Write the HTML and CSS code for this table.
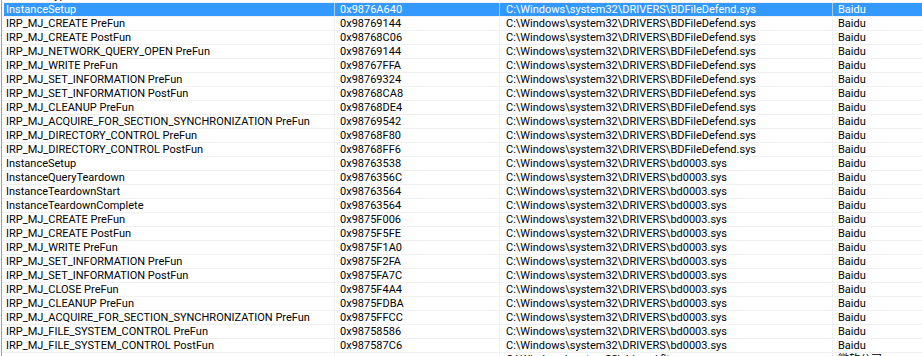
FILE: index.html
```html
<!DOCTYPE html>
<html>
<head>
<meta charset="utf-8">
<link rel="stylesheet" href="styles.css">
</head>
<body>
<div class="list">
  <div class="row prev"><div class="c c1">Callback type</div><div class="c c2"></div><div class="c c3"></div><div class="c c4">文件厂商</div></div>
  <div class="row sel"><div class="c c1">InstanceSetup</div><div class="c c2">0x9876A640</div><div class="c c3">C:\Windows\system32\DRIVERS\BDFileDefend.sys</div><div class="c c4">Baidu</div></div>
  <div class="row"><div class="c c1">IRP_MJ_CREATE PreFun</div><div class="c c2">0x98769144</div><div class="c c3">C:\Windows\system32\DRIVERS\BDFileDefend.sys</div><div class="c c4">Baidu</div></div>
  <div class="row"><div class="c c1">IRP_MJ_CREATE PostFun</div><div class="c c2">0x98768C06</div><div class="c c3">C:\Windows\system32\DRIVERS\BDFileDefend.sys</div><div class="c c4">Baidu</div></div>
  <div class="row"><div class="c c1">IRP_MJ_NETWORK_QUERY_OPEN PreFun</div><div class="c c2">0x98769144</div><div class="c c3">C:\Windows\system32\DRIVERS\BDFileDefend.sys</div><div class="c c4">Baidu</div></div>
  <div class="row"><div class="c c1">IRP_MJ_WRITE PreFun</div><div class="c c2">0x98767FFA</div><div class="c c3">C:\Windows\system32\DRIVERS\BDFileDefend.sys</div><div class="c c4">Baidu</div></div>
  <div class="row"><div class="c c1">IRP_MJ_SET_INFORMATION PreFun</div><div class="c c2">0x98769324</div><div class="c c3">C:\Windows\system32\DRIVERS\BDFileDefend.sys</div><div class="c c4">Baidu</div></div>
  <div class="row"><div class="c c1">IRP_MJ_SET_INFORMATION PostFun</div><div class="c c2">0x98768CA8</div><div class="c c3">C:\Windows\system32\DRIVERS\BDFileDefend.sys</div><div class="c c4">Baidu</div></div>
  <div class="row"><div class="c c1">IRP_MJ_CLEANUP PreFun</div><div class="c c2">0x98768DE4</div><div class="c c3">C:\Windows\system32\DRIVERS\BDFileDefend.sys</div><div class="c c4">Baidu</div></div>
  <div class="row"><div class="c c1">IRP_MJ_ACQUIRE_FOR_SECTION_SYNCHRONIZATION PreFun</div><div class="c c2">0x98769542</div><div class="c c3">C:\Windows\system32\DRIVERS\BDFileDefend.sys</div><div class="c c4">Baidu</div></div>
  <div class="row"><div class="c c1">IRP_MJ_DIRECTORY_CONTROL PreFun</div><div class="c c2">0x98768F80</div><div class="c c3">C:\Windows\system32\DRIVERS\BDFileDefend.sys</div><div class="c c4">Baidu</div></div>
  <div class="row"><div class="c c1">IRP_MJ_DIRECTORY_CONTROL PostFun</div><div class="c c2">0x98768FF6</div><div class="c c3">C:\Windows\system32\DRIVERS\BDFileDefend.sys</div><div class="c c4">Baidu</div></div>
  <div class="row"><div class="c c1">InstanceSetup</div><div class="c c2">0x98763538</div><div class="c c3">C:\Windows\system32\DRIVERS\bd0003.sys</div><div class="c c4">Baidu</div></div>
  <div class="row"><div class="c c1">InstanceQueryTeardown</div><div class="c c2">0x9876356C</div><div class="c c3">C:\Windows\system32\DRIVERS\bd0003.sys</div><div class="c c4">Baidu</div></div>
  <div class="row"><div class="c c1">InstanceTeardownStart</div><div class="c c2">0x98763564</div><div class="c c3">C:\Windows\system32\DRIVERS\bd0003.sys</div><div class="c c4">Baidu</div></div>
  <div class="row"><div class="c c1">InstanceTeardownComplete</div><div class="c c2">0x98763564</div><div class="c c3">C:\Windows\system32\DRIVERS\bd0003.sys</div><div class="c c4">Baidu</div></div>
  <div class="row"><div class="c c1">IRP_MJ_CREATE PreFun</div><div class="c c2">0x9875F006</div><div class="c c3">C:\Windows\system32\DRIVERS\bd0003.sys</div><div class="c c4">Baidu</div></div>
  <div class="row"><div class="c c1">IRP_MJ_CREATE PostFun</div><div class="c c2">0x9875F5FE</div><div class="c c3">C:\Windows\system32\DRIVERS\bd0003.sys</div><div class="c c4">Baidu</div></div>
  <div class="row"><div class="c c1">IRP_MJ_WRITE PreFun</div><div class="c c2">0x9875F1A0</div><div class="c c3">C:\Windows\system32\DRIVERS\bd0003.sys</div><div class="c c4">Baidu</div></div>
  <div class="row"><div class="c c1">IRP_MJ_SET_INFORMATION PreFun</div><div class="c c2">0x9875F2FA</div><div class="c c3">C:\Windows\system32\DRIVERS\bd0003.sys</div><div class="c c4">Baidu</div></div>
  <div class="row"><div class="c c1">IRP_MJ_SET_INFORMATION PostFun</div><div class="c c2">0x9875FA7C</div><div class="c c3">C:\Windows\system32\DRIVERS\bd0003.sys</div><div class="c c4">Baidu</div></div>
  <div class="row"><div class="c c1">IRP_MJ_CLOSE PreFun</div><div class="c c2">0x9875F4A4</div><div class="c c3">C:\Windows\system32\DRIVERS\bd0003.sys</div><div class="c c4">Baidu</div></div>
  <div class="row"><div class="c c1">IRP_MJ_CLEANUP PreFun</div><div class="c c2">0x9875FDBA</div><div class="c c3">C:\Windows\system32\DRIVERS\bd0003.sys</div><div class="c c4">Baidu</div></div>
  <div class="row"><div class="c c1">IRP_MJ_ACQUIRE_FOR_SECTION_SYNCHRONIZATION PreFun</div><div class="c c2">0x9875FFCC</div><div class="c c3">C:\Windows\system32\DRIVERS\bd0003.sys</div><div class="c c4">Baidu</div></div>
  <div class="row"><div class="c c1">IRP_MJ_FILE_SYSTEM_CONTROL PreFun</div><div class="c c2">0x98758586</div><div class="c c3">C:\Windows\system32\DRIVERS\bd0003.sys</div><div class="c c4">Baidu</div></div>
  <div class="row"><div class="c c1">IRP_MJ_FILE_SYSTEM_CONTROL PostFun</div><div class="c c2">0x987587C6</div><div class="c c3">C:\Windows\system32\DRIVERS\bd0003.sys</div><div class="c c4">Baidu</div></div>
  <div class="row"><div class="c c1"></div><div class="c c2"></div><div class="c c3">C:\Windows\system32\drivers\fltmgr.sys</div><div class="c c4">微软公司</div></div>
</div>
</body>
</html>
```

FILE: styles.css
```css
html, body {
  margin: 0;
  padding: 0;
  overflow: hidden;
  background: #ffffff;
}

.list {
  margin-left: 1px;
  border-left: 1px solid #a0a0a0;
  height: 356px;
  overflow: hidden;
  font-family: Roboto, "Noto Sans CJK SC", sans-serif;
  font-size: 11px;
  color: #000000;
}

.row {
  display: flex;
  height: 13px;
  line-height: 13px;
  border-bottom: 1px solid #f0f0f0;
  white-space: nowrap;
}

.row.prev {
  margin-top: -11px;
}

.c {
  flex: none;
  overflow: hidden;
  border-right: 1px solid #f0f0f0;
}

.c1 {
  width: 328px;
  margin-left: 2px;
  padding-left: 2px;
}

.c2 {
  width: 159px;
  padding-left: 5px;
}

.c3 {
  width: 326px;
  padding-left: 6px;
}

.c4 {
  flex: 1;
  padding-left: 5px;
  border-right: none;
}

.row.sel .c {
  background: #3399ff;
  color: #ffffff;
  border-right-color: #a6d0fb;
}
```
